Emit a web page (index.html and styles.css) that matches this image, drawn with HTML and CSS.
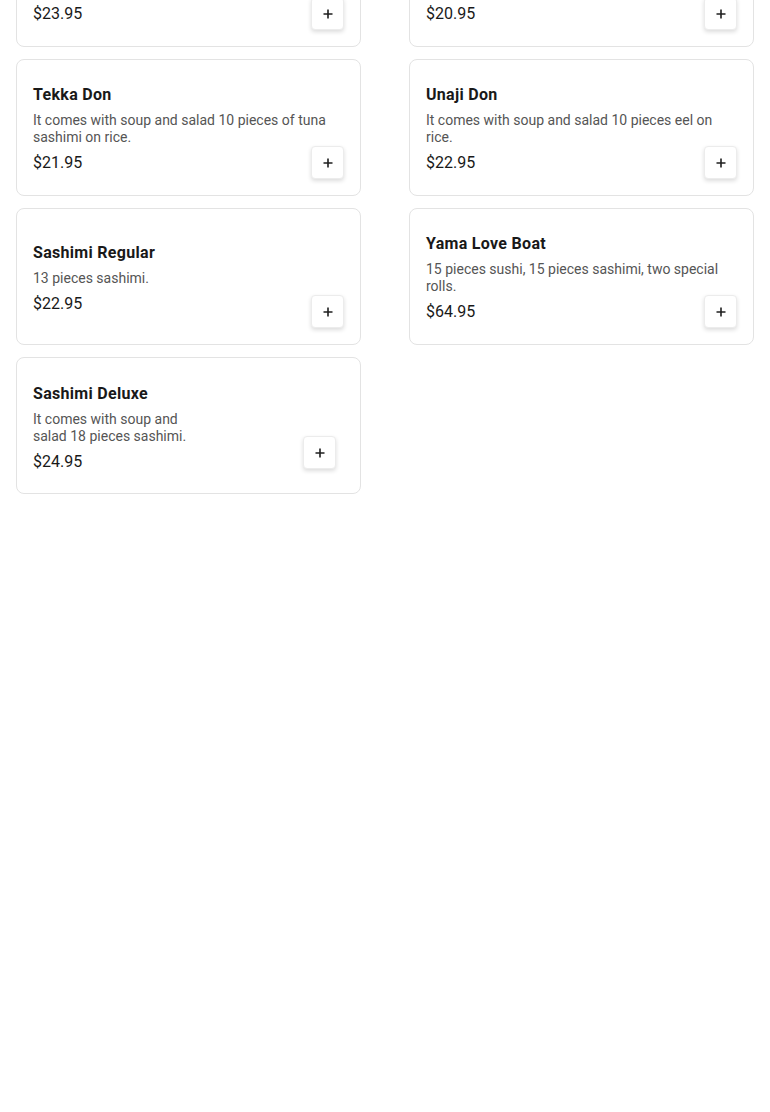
FILE: index.html
```html
<!DOCTYPE html>
<html lang="en">
<head>
<meta charset="utf-8">
<title>Menu</title>
<link rel="stylesheet" href="styles.css">
</head>
<body>
<main class="menu">
  <article class="card">
    <div class="info">
      <h3 class="title">Chirashi</h3>
      <p class="desc">It comes with soup and salad assorted sashimi on sushi rice.</p>
      <div class="price">$23.95</div>
    </div>
    <button class="add" aria-label="Add"><svg viewBox="0 0 12 12" width="12" height="12"><path d="M6 1.5v9M1.5 6h9" stroke="#1f1f1f" stroke-width="1.6" fill="none"/></svg></button>
  </article>
  <article class="card">
    <div class="info">
      <h3 class="title">Sake Don</h3>
      <p class="desc">It comes with soup and salad 10 pieces of salmon on rice.</p>
      <div class="price">$20.95</div>
    </div>
    <button class="add" aria-label="Add"><svg viewBox="0 0 12 12" width="12" height="12"><path d="M6 1.5v9M1.5 6h9" stroke="#1f1f1f" stroke-width="1.6" fill="none"/></svg></button>
  </article>
  <article class="card">
    <div class="info">
      <h3 class="title">Tekka Don</h3>
      <p class="desc">It comes with soup and salad 10 pieces of tuna sashimi on rice.</p>
      <div class="price">$21.95</div>
    </div>
    <button class="add" aria-label="Add"><svg viewBox="0 0 12 12" width="12" height="12"><path d="M6 1.5v9M1.5 6h9" stroke="#1f1f1f" stroke-width="1.6" fill="none"/></svg></button>
  </article>
  <article class="card">
    <div class="info">
      <h3 class="title">Unaji Don</h3>
      <p class="desc">It comes with soup and salad 10 pieces eel on rice.</p>
      <div class="price">$22.95</div>
    </div>
    <button class="add" aria-label="Add"><svg viewBox="0 0 12 12" width="12" height="12"><path d="M6 1.5v9M1.5 6h9" stroke="#1f1f1f" stroke-width="1.6" fill="none"/></svg></button>
  </article>
  <article class="card">
    <div class="info">
      <h3 class="title">Sashimi Regular</h3>
      <p class="desc">13 pieces sashimi.</p>
      <div class="price">$22.95</div>
    </div>
    <button class="add" aria-label="Add"><svg viewBox="0 0 12 12" width="12" height="12"><path d="M6 1.5v9M1.5 6h9" stroke="#1f1f1f" stroke-width="1.6" fill="none"/></svg></button>
  </article>
  <article class="card">
    <div class="info">
      <h3 class="title">Yama Love Boat</h3>
      <p class="desc">15 pieces sushi, 15 pieces sashimi, two special rolls.</p>
      <div class="price">$64.95</div>
    </div>
    <button class="add" aria-label="Add"><svg viewBox="0 0 12 12" width="12" height="12"><path d="M6 1.5v9M1.5 6h9" stroke="#1f1f1f" stroke-width="1.6" fill="none"/></svg></button>
  </article>
  <article class="card card-narrow">
    <div class="info">
      <h3 class="title">Sashimi Deluxe</h3>
      <p class="desc">It comes with soup and salad 18 pieces sashimi.</p>
      <div class="price">$24.95</div>
    </div>
    <button class="add" aria-label="Add"><svg viewBox="0 0 12 12" width="12" height="12"><path d="M6 1.5v9M1.5 6h9" stroke="#1f1f1f" stroke-width="1.6" fill="none"/></svg></button>
  </article>
</main>
</body>
</html>
```
FILE: styles.css
```css
html, body {
  margin: 0;
  padding: 0;
  background: #ffffff;
}

body {
  font-family: Roboto, "Liberation Sans", Arial, sans-serif;
  color: #191919;
  padding: 0 16px;
}

.menu {
  display: grid;
  grid-template-columns: 1fr 1fr;
  column-gap: 48px;
  row-gap: 12px;
  margin-top: -90px;
}

.card {
  box-sizing: border-box;
  height: 137px;
  border: 1px solid #e3e3e3;
  border-radius: 8px;
  padding: 16px;
  display: grid;
  grid-template-columns: 1fr;
  grid-template-rows: 1fr;
  background: #fff;
}

.info,
.add {
  grid-area: 1 / 1;
}

.info {
  align-self: center;
  display: flex;
  flex-direction: column;
  min-width: 0;
  padding-top: 2px;
}

.title {
  margin: 0 0 6px;
  font-size: 16px;
  line-height: 22px;
  font-weight: 700;
  letter-spacing: 0.3px;
  color: #191919;
}

.desc {
  margin: 0 0 7px;
  font-size: 14px;
  line-height: 17px;
  font-weight: 400;
  color: #555555;
}

.price {
  font-size: 16px;
  line-height: 20px;
  font-weight: 400;
  color: #191919;
}

.add {
  align-self: end;
  justify-self: end;
  width: 33px;
  height: 33px;
  padding: 0;
  border: 1px solid #ececec;
  border-radius: 4px;
  background: #fff;
  box-shadow: 0 2px 4px rgba(0, 0, 0, 0.14);
  display: flex;
  align-items: center;
  justify-content: center;
}

.card-narrow .info {
  width: 160px;
  margin-top: 2px;
}

.card-narrow .add {
  margin: 0 8px 8px 0;
}
```
